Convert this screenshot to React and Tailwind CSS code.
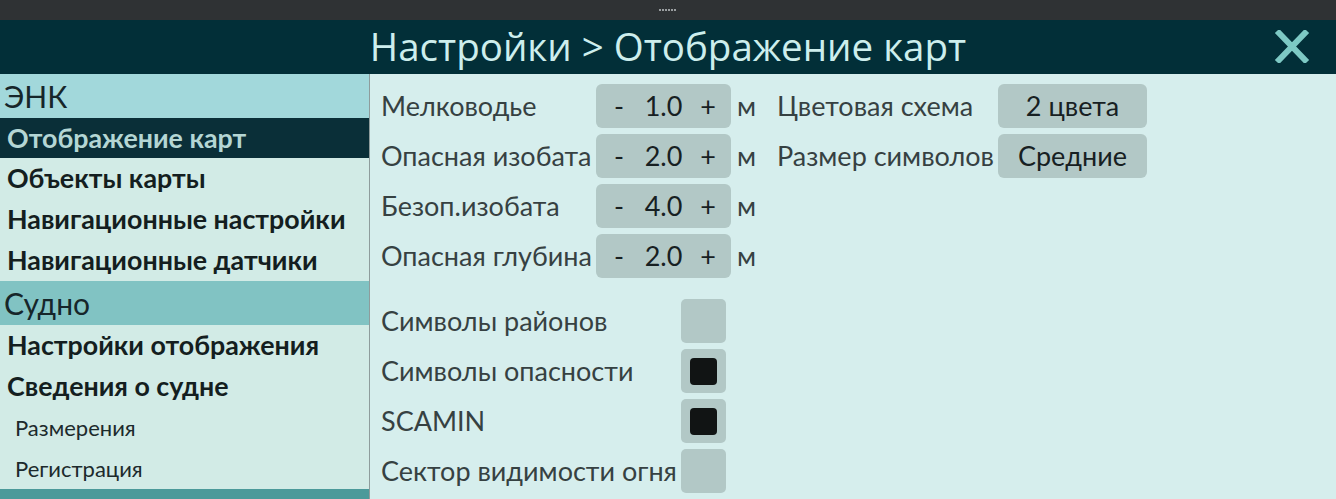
import React from "react";

const depthRows = [
  { label: "Мелководье", value: "1.0", right: { label: "Цветовая схема", value: "2 цвета" } },
  { label: "Опасная изобата", value: "2.0", right: { label: "Размер символов", value: "Средние" } },
  { label: "Безоп.изобата", value: "4.0" },
  { label: "Опасная глубина", value: "2.0" },
];

const toggles = [
  { label: "Символы районов", on: false },
  { label: "Символы опасности", on: true },
  { label: "SCAMIN", on: true },
  { label: "Сектор видимости огня", on: false },
];

function SideHeader({ children, className }) {
  return (
    <div className={"flex items-center pl-[4px] text-[30px] text-[#16262a] " + className}>
      {children}
    </div>
  );
}

function SideItem({ children, active, small }) {
  if (small) {
    return (
      <div className="h-[41px] flex items-center pl-[15px] text-[22px] text-[#1c2a2c]">
        {children}
      </div>
    );
  }
  return (
    <div
      className={
        "flex items-center pl-[7px] text-[26.8px] font-bold " +
        (active ? "h-[40px] bg-[#0a2f38] text-[#b4d6d4]" : "h-[41px] text-[#141e20]")
      }
    >
      {children}
    </div>
  );
}

function Stepper({ value }) {
  return (
    <div className="w-[135px] h-[44px] rounded-[6px] bg-[#b2c8c6] grid grid-cols-[46px_1fr_46px] items-center text-[27px] text-[#172022]">
      <span className="text-center">-</span>
      <span className="text-center">{value}</span>
      <span className="text-center">+</span>
    </div>
  );
}

export default function App() {
  return (
    <div
      className="w-[1336px] h-[499px] overflow-hidden flex flex-col bg-[#d6eeed]"
      style={{ fontFamily: "Lato, 'Open Sans', sans-serif" }}
    >
      {/* window grip */}
      <div className="h-[20px] bg-[#2f3234] flex items-center justify-center">
        <div className="flex gap-[1.5px] ml-[-1px]">
          {[0, 1, 2, 3, 4, 5].map((i) => (
            <span key={i} className="w-[1.5px] h-[2px] bg-[#9a9ea0]" />
          ))}
        </div>
      </div>

      {/* title bar */}
      <div className="h-[54px] bg-[#022f38] relative flex items-center justify-center">
        <span
          className="text-[38.5px] text-[#cdeeed] leading-none mt-[-1px]"
          style={{ fontFamily: "'Open Sans', sans-serif" }}
        >
          Настройки &gt; Отображение карт
        </span>
        <svg className="absolute left-[1274px] top-[10px]" width="36" height="33" viewBox="0 0 36 33">
          <path d="M3 1 L33 32 M33 1 L3 32" stroke="#7dc9c4" strokeWidth="6" />
        </svg>
      </div>

      <div className="flex-1 flex min-h-0">
        {/* sidebar */}
        <div className="w-[370px] shrink-0 bg-[#d2ebe6] border-r border-[#8e9c9c] flex flex-col">
          <SideHeader className="h-[44px] bg-[#a2d8db]">ЭНК</SideHeader>
          <SideItem active>Отображение карт</SideItem>
          <SideItem>Объекты карты</SideItem>
          <SideItem>Навигационные настройки</SideItem>
          <SideItem>Навигационные датчики</SideItem>
          <SideHeader className="h-[44px] bg-[#81c3c3]">Судно</SideHeader>
          <SideItem>Настройки отображения</SideItem>
          <SideItem>Сведения о судне</SideItem>
          <SideItem small>Размерения</SideItem>
          <SideItem small>Регистрация</SideItem>
          <div className="flex-1 bg-[#4b9a9a]" />
        </div>

        {/* content */}
        <div className="flex-1 pl-[11px] pt-[10px] text-[#364142]">
          <div className="flex flex-col gap-[6px]">
            {depthRows.map((r) => (
              <div key={r.label} className="flex items-center h-[44px]">
                <span className="w-[215px] text-[27px]">{r.label}</span>
                <Stepper value={r.value} />
                <span className="w-[46px] pl-[6px] text-[27px]">м</span>
                {r.right && (
                  <>
                    <span className="w-[221px] text-[27px]">{r.right.label}</span>
                    <div className="w-[149px] h-[44px] rounded-[6px] bg-[#b2c8c6] flex items-center justify-center text-[27px] text-[#172022]">
                      {r.right.value}
                    </div>
                  </>
                )}
              </div>
            ))}
          </div>

          <div className="flex flex-col gap-[6px] mt-[21px]">
            {toggles.map((t) => (
              <div key={t.label} className="flex items-center h-[44px]">
                <span className="w-[300px] text-[27px]">{t.label}</span>
                <div className="w-[45px] h-[44px] rounded-[5px] bg-[#b2c8c6] flex items-center justify-center">
                  {t.on && <div className="w-[27px] h-[27px] rounded-[4px] bg-[#111414]" />}
                </div>
              </div>
            ))}
          </div>
        </div>
      </div>
    </div>
  );
}
